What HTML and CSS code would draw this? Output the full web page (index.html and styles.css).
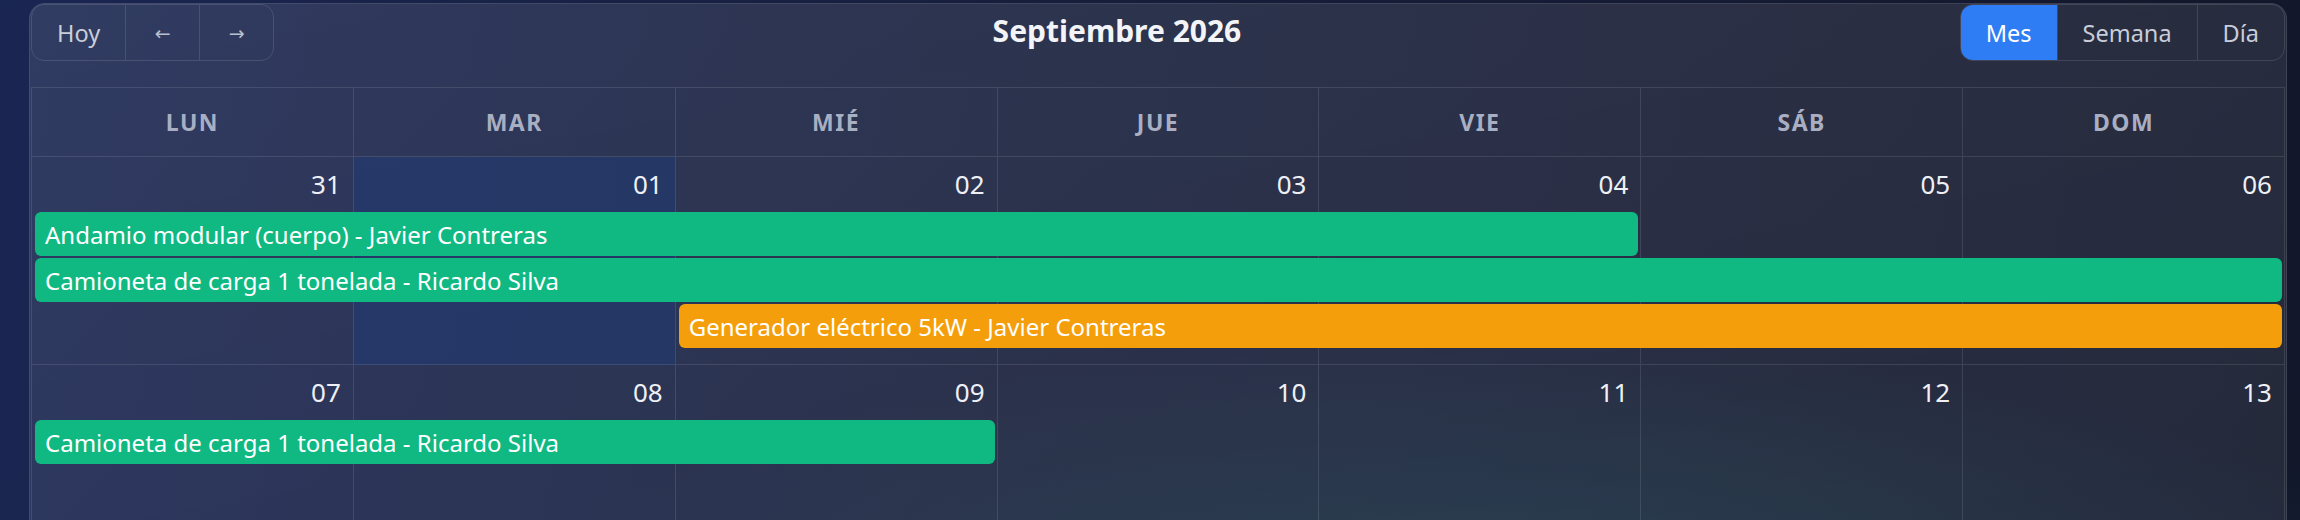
FILE: index.html
```html
<!DOCTYPE html>
<html lang="es">
<head>
<meta charset="utf-8">
<title>Calendario</title>
<link rel="stylesheet" href="styles.css">
</head>
<body>
<div class="card">
  <div class="toolbar">
    <div class="btn-group">
      <button class="btn">Hoy</button>
      <button class="btn arrow">←</button>
      <button class="btn arrow">→</button>
    </div>
    <h2 class="title">Septiembre 2026</h2>
    <div class="btn-group">
      <button class="btn active">Mes</button>
      <button class="btn">Semana</button>
      <button class="btn">Día</button>
    </div>
  </div>
  <div class="calendar">
    <div class="head">
      <div class="head-cell">Lun</div>
      <div class="head-cell">Mar</div>
      <div class="head-cell">Mié</div>
      <div class="head-cell">Jue</div>
      <div class="head-cell">Vie</div>
      <div class="head-cell">Sáb</div>
      <div class="head-cell">Dom</div>
    </div>
    <div class="week">
      <div class="day">31</div>
      <div class="day today">01</div>
      <div class="day">02</div>
      <div class="day">03</div>
      <div class="day">04</div>
      <div class="day">05</div>
      <div class="day">06</div>
      <div class="event green" style="grid-column: 1 / 6; grid-row: 2;">Andamio modular (cuerpo) - Javier Contreras</div>
      <div class="event green" style="grid-column: 1 / 8; grid-row: 3;">Camioneta de carga 1 tonelada - Ricardo Silva</div>
      <div class="event orange" style="grid-column: 3 / 8; grid-row: 4;">Generador eléctrico 5kW - Javier Contreras</div>
    </div>
    <div class="week">
      <div class="day">07</div>
      <div class="day">08</div>
      <div class="day">09</div>
      <div class="day">10</div>
      <div class="day">11</div>
      <div class="day">12</div>
      <div class="day">13</div>
      <div class="event green" style="grid-column: 1 / 4; grid-row: 2;">Camioneta de carga 1 tonelada - Ricardo Silva</div>
    </div>
  </div>
</div>
</body>
</html>
```
FILE: styles.css
```css
html, body {
  margin: 0;
  height: 520px;
  overflow: hidden;
}

body {
  font-family: "Noto Sans", "Open Sans", "DejaVu Sans", sans-serif;
  background:
    radial-gradient(ellipse 60% 70% at 65% 115%, rgba(24, 62, 74, 0.6), rgba(24, 62, 74, 0) 70%),
    linear-gradient(100deg, #1a2652 0%, #171e3b 45%, #12172a 100%);
  color: #eef0f5;
}

.card {
  margin: 3px 13px 0 29px;
  height: 517px;
  box-sizing: border-box;
  overflow: hidden;
  border: 1px solid rgba(255, 255, 255, 0.1);
  border-bottom: none;
  border-radius: 16px 16px 0 0;
  padding: 0 1px;
  background: linear-gradient(170deg, rgba(255, 255, 255, 0.1), rgba(255, 255, 255, 0.08));
}

.toolbar {
  display: flex;
  align-items: center;
  height: 57px;
}

.btn-group {
  display: flex;
  height: 57px;
  box-sizing: border-box;
  border: 1px solid rgba(255, 255, 255, 0.12);
  border-radius: 13px;
  overflow: hidden;
}

.btn {
  font-family: inherit;
  font-size: 23.5px;
  color: #c9cdd9;
  background: transparent;
  border: none;
  border-left: 1px solid rgba(255, 255, 255, 0.12);
  padding: 0 25px;
  margin: 0;
  height: 100%;
}

.btn:first-child {
  border-left: none;
}

.btn.arrow {
  width: 74px;
  padding: 0;
  font-family: "DejaVu Sans", sans-serif;
  font-size: 19px;
  color: #b9bfcf;
}

.btn.active {
  background: #2f7df5;
  color: #ffffff;
}

.title {
  flex: 1;
  margin: 0 0 4px;
  text-align: center;
  font-size: 30px;
  font-weight: 700;
  color: #f3f4f8;
}

.calendar {
  margin-top: 26px;
  border-left: 1px solid rgba(255, 255, 255, 0.11);
  border-top: 1px solid rgba(255, 255, 255, 0.11);
}

.head {
  display: grid;
  grid-template-columns: repeat(7, 1fr);
}

.head-cell {
  height: 69px;
  box-sizing: border-box;
  border-right: 1px solid rgba(255, 255, 255, 0.11);
  border-bottom: 1px solid rgba(255, 255, 255, 0.11);
  display: flex;
  align-items: center;
  justify-content: center;
  font-size: 23px;
  font-weight: 700;
  letter-spacing: 1.5px;
  text-transform: uppercase;
  color: #a9afc3;
}

.week {
  display: grid;
  grid-template-columns: repeat(7, 1fr);
  grid-template-rows: 55px 46px 46px 46px 1fr;
  height: 208px;
}

.day {
  grid-row: 1 / -1;
  box-sizing: border-box;
  border-right: 1px solid rgba(255, 255, 255, 0.11);
  border-bottom: 1px solid rgba(255, 255, 255, 0.11);
  padding: 9px 12px 0 0;
  text-align: right;
  font-size: 26px;
  color: #eef0f5;
}

.day:nth-child(1) { grid-column: 1; }
.day:nth-child(2) { grid-column: 2; }
.day:nth-child(3) { grid-column: 3; }
.day:nth-child(4) { grid-column: 4; }
.day:nth-child(5) { grid-column: 5; }
.day:nth-child(6) { grid-column: 6; }
.day:nth-child(7) { grid-column: 7; }

.day.today {
  background: rgba(30, 58, 118, 0.5);
}

.event {
  margin: 0 3px 2px;
  height: 44px;
  box-sizing: border-box;
  border-radius: 6px;
  padding-left: 10px;
  display: flex;
  align-items: center;
  white-space: nowrap;
  overflow: hidden;
  font-size: 24px;
  color: #ffffff;
  z-index: 1;
}

.event.green {
  background: #10b981;
}

.event.orange {
  background: #f59e0b;
}
```
